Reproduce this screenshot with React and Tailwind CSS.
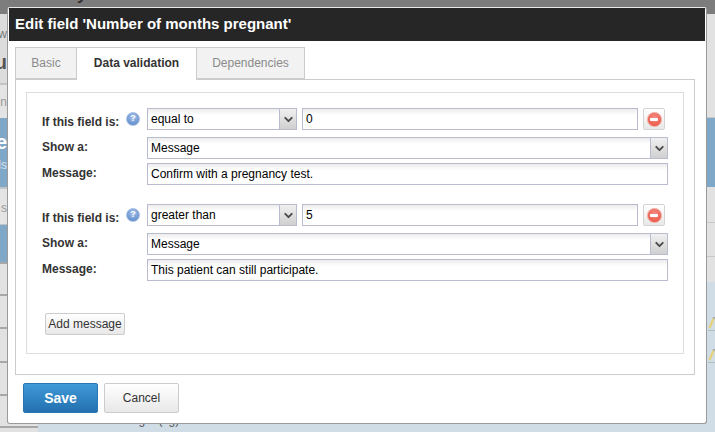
import { ChevronDown } from 'lucide-react';

function Pencil() {
  return (
    <svg width="7" height="14" viewBox="0 0 7 14">
      <path d="M5.5 1.5 L1.5 11" stroke="#e6d27a" strokeWidth="2.2" />
      <path d="M5.5 0 L6.5 1.5" stroke="#999" strokeWidth="1.5" />
      <path d="M0 13.5 H7" stroke="#b5bcc2" strokeWidth="1" />
    </svg>
  );
}

// text of the page behind, only its right end shows next to the dialog
function Peek({ className, children }) {
  return (
    <div className={`flex w-[7px] justify-end overflow-hidden whitespace-nowrap ${className}`}>{children}</div>
  );
}

function HelpIcon() {
  return (
    <span className="flex h-[14px] w-[14px] items-center justify-center rounded-full border border-[#a9c2e6] bg-[radial-gradient(circle_at_50%_35%,#a9c4ea,#4f7fc4)] text-[9px] leading-none font-bold text-white">
      ?
    </span>
  );
}

function RemoveButton() {
  return (
    <button className="flex h-[22px] w-[22px] items-center justify-center rounded-[2px] border border-[#d4d4d4] bg-linear-to-b from-white to-[#e8e8e8]">
      <span className="flex h-[15px] w-[15px] items-center justify-center rounded-full border border-[#f0a59d] bg-[radial-gradient(circle_at_50%_35%,#f58a80,#e8503f)]">
        <span className="h-[3px] w-[8px] rounded-[1px] bg-white" />
      </span>
    </button>
  );
}

function SelectBox({ value, className }) {
  return (
    <div className={`flex h-[22px] items-stretch border border-[#b9bbcf] bg-linear-to-b from-[#ececec] to-white to-30% ${className}`}>
      <span className="flex-1 pl-[3px] text-[12px] leading-[21px] text-black">{value}</span>
      <span className="flex w-[17px] items-center justify-center border-l border-[#b9bbcf] bg-linear-to-b from-[#f0f0f0] to-[#cfcfcf]">
        <ChevronDown size={13} strokeWidth={3.5} className="text-[#4a4a4a]" />
      </span>
    </div>
  );
}

function TextBox({ value, className }) {
  return (
    <div className={`h-[22px] border border-[#b9bbcf] bg-linear-to-b from-[#ececec] to-white to-30% pl-[3px] text-[12px] leading-[21px] text-black ${className}`}>
      {value}
    </div>
  );
}

function Rule({ test, value, message }) {
  return (
    <div className="flex flex-col">
      <div className="flex h-[22px] items-center">
        <span className="w-[83px] pt-[5px] text-[12px] leading-[16px] font-bold text-[#333]">If this field is:</span>
        <span className="flex w-[22px] pb-[1px] pl-px">
          <HelpIcon />
        </span>
        <SelectBox value={test} className="w-[150px]" />
        <TextBox value={value} className="ml-[5px] w-[336px]" />
        <span className="ml-[5px] flex">
          <RemoveButton />
        </span>
      </div>
      <div className="mt-[7px] flex h-[22px] items-center">
        <span className="w-[105px] pb-[3px] text-[12px] leading-[16px] font-bold text-[#333]">Show a:</span>
        <SelectBox value="Message" className="w-[521px]" />
      </div>
      <div className="mt-[4px] flex h-[22px] items-center">
        <span className="w-[105px] pb-[3px] text-[12px] leading-[16px] font-bold text-[#333]">Message:</span>
        <TextBox value={message} className="w-[521px]" />
      </div>
    </div>
  );
}

export default function App() {
  return (
    <div className="relative flex h-[432px] w-[715px] flex-col overflow-hidden bg-[#d0dde6] font-['Liberation_Sans',Arial,sans-serif]">
      {/* page behind the dialog */}
      <div className="h-[14px] overflow-hidden bg-[#7c7c7c] pl-[24px] text-[17px] leading-[0px] font-bold whitespace-nowrap text-[#2e2e2e]">
        <span className="relative top-[-5px]">n Study v0.2 4</span>
      </div>
      <div className="flex flex-1">
        <div className="flex w-[38px] flex-col bg-[#e2e2e2]">
          <div className="h-[71px] border-b-2 border-[#c4c4c4] bg-[#dcdcdc] pt-[11px]">
            <Peek className="text-[12px] text-[#777]">w</Peek>
            <Peek className="mt-[5px] text-[20px] leading-[28px] font-bold text-[#555]">cu</Peek>
          </div>
          <div className="h-[33px] bg-[#e4e4e4] pt-[8px]">
            <Peek className="text-[12px] text-[#999]">n</Peek>
          </div>
          <div className="h-[69px] bg-[#7fa8c8] pt-[12px]">
            <Peek className="text-[20px] leading-[24px] font-bold text-white">e</Peek>
            <Peek className="mt-[2px] text-[12px] text-[#d8e4ee]">ds</Peek>
          </div>
          <div className="h-[38px] border-t-2 border-b border-[#c4c4c4] bg-[#e4e4e4] pt-[10px]">
            <Peek className="text-[12px] text-[#999]">s</Peek>
          </div>
          <div className="h-[39px] border-b-2 border-[#a8a8a8] bg-[#7fa8c8]" />
          <div className="h-[32px] border-b-2 border-[#a8a8a8] bg-[#e2e2e2]" />
          <div className="h-[33px] border-b-2 border-[#a8a8a8] bg-[#e2e2e2]" />
          <div className="h-[34px] border-b-2 border-[#a8a8a8] bg-[#e2e2e2]" />
          <div className="h-[33px] border-b-2 border-[#a8a8a8] bg-[#e2e2e2]" />
          <div className="h-[32px] border-b-2 border-[#a8a8a8] bg-[#e2e2e2]" />
        </div>
        <div className="flex flex-1 flex-col justify-end pb-[5px] pl-[80px]">
          <span className="text-[12px] leading-[14px] text-[#555]">Weight (kg)</span>
        </div>
        <div className="flex w-[8px] flex-col">
          <div className="h-[104px] border-b border-[#c8c8c8] bg-[#e2e2e2]" />
          <div className="h-[69px] bg-[#7fa8c8]" />
          <div className="h-[36px] border-b border-[#c8c8c8] bg-[#e2e2e2]" />
          <div className="h-[34px] border-b border-[#c8c8c8] bg-[#e2e2e2]" />
          <div className="h-[25px] bg-[#e2e2e2]" />
          <div className="flex flex-col gap-[18px] pt-[35px] pl-px">
            <Pencil />
            <Pencil />
          </div>
        </div>
      </div>

      {/* dialog */}
      <div className="absolute top-[7px] left-[7px] flex h-[417px] w-[700px] flex-col rounded-[3px] border border-[#9a9a9a] border-t-[#e8e8e8] bg-white">
        <div className="mx-px flex h-[33px] items-center bg-[#262626] pb-[1px] pl-[6px] text-[15px] font-bold text-white">
          Edit field 'Number of months pregnant'
        </div>
        <div className="mt-[6px] ml-[7px] flex h-[32px] text-[12px]">
          <div className="relative w-[62px] border border-[#ccc] bg-[#f2f2f2] pt-[6px] text-center text-[#8a8a8a]">Basic</div>
          <div className="relative z-10 h-[33px] w-[119px] border-t border-[#ccc] bg-white pt-[6px] text-center font-bold text-[#333]">Data validation</div>
          <div className="relative w-[109px] border border-[#ccc] bg-[#f2f2f2] pt-[6px] text-center text-[#8a8a8a]">Dependencies</div>
        </div>
        <div className="mr-[11px] ml-[7px] flex h-[296px] flex-col border border-[#ccc] px-[10px] pt-[12px]">
          <div className="flex h-[262px] flex-col border border-[#ddd] pt-[15px] pl-[15px]">
            <Rule test="equal to" value="0" message="Confirm with a pregnancy test." />
            <div className="h-[19px]" />
            <Rule test="greater than" value="5" message="This patient can still participate." />
            <button className="mt-[32px] ml-[3px] h-[22px] w-[80px] rounded-[2px] border border-[#ccc] bg-linear-to-b from-white to-[#e8e8e8] text-[12px] text-[#333]">
              Add message
            </button>
          </div>
        </div>
        <div className="mt-[8px] ml-[15px] flex gap-[6px]">
          <button className="h-[30px] w-[75px] rounded-[2px] border border-[#2a76b4] bg-linear-to-b from-[#3f9ad6] to-[#2470b0] text-[14px] font-bold text-white">Save</button>
          <button className="h-[30px] w-[75px] rounded-[2px] border border-[#ccc] bg-linear-to-b from-white to-[#e8e8e8] text-[12px] text-[#333]">Cancel</button>
        </div>
      </div>
    </div>
  );
}
